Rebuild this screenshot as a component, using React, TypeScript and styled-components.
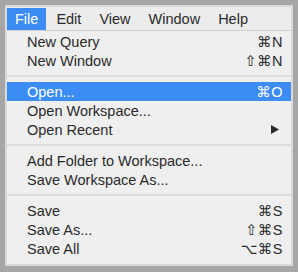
import React from "react";
import styled, { createGlobalStyle } from "styled-components";

const GlobalStyle = createGlobalStyle`
  html, body {
    margin: 0;
    padding: 0;
    background: #a6a6a6;
  }
  body {
    font-family: "Liberation Sans", "DejaVu Sans", Arial, sans-serif;
    -webkit-font-smoothing: antialiased;
  }
`;

type Entry =
  | { kind: "item"; label: string; keys?: string; submenu?: boolean; active?: boolean }
  | { kind: "sep" };

const topMenus = ["File", "Edit", "View", "Window", "Help"];

const entries: Entry[] = [
  { kind: "item", label: "New Query", keys: "⌘N" },
  { kind: "item", label: "New Window", keys: "⇧⌘N" },
  { kind: "sep" },
  { kind: "item", label: "Open...", keys: "⌘O", active: true },
  { kind: "item", label: "Open Workspace..." },
  { kind: "item", label: "Open Recent", submenu: true },
  { kind: "sep" },
  { kind: "item", label: "Add Folder to Workspace..." },
  { kind: "item", label: "Save Workspace As..." },
  { kind: "sep" },
  { kind: "item", label: "Save", keys: "⌘S" },
  { kind: "item", label: "Save As...", keys: "⇧⌘S" },
  { kind: "item", label: "Save All", keys: "⌥⌘S" },
];

const App: React.FC = () => {
  return (
    <>
      <GlobalStyle />
      <Frame>
        <Window>
          <MenuBar>
            {topMenus.map((m, i) => (
              <BarItem key={m} $open={i === 0}>
                {m}
              </BarItem>
            ))}
          </MenuBar>
          <Dropdown>
            {entries.map((e, i) =>
              e.kind === "sep" ? (
                <Separator key={i} />
              ) : (
                <Row key={i} $active={!!e.active}>
                  <Label>{e.label}</Label>
                  {e.keys && <Keys>{e.keys}</Keys>}
                  {e.submenu && (
                    <Arrow viewBox="0 0 8 9">
                      <path d="M0 0 L8 4.5 L0 9 Z" fill="currentColor" />
                    </Arrow>
                  )}
                </Row>
              )
            )}
          </Dropdown>
        </Window>
      </Frame>
    </>
  );
};

export default App;

const Frame = styled.div`
  width: 298px;
  height: 272px;
  box-sizing: border-box;
  padding: 5px 5px 6px 5px;
  background: #a6a6a6;
`;

const Window = styled.div`
  display: flex;
  flex-direction: column;
  border: 2px solid #d9d9d9;
  background: #efefef;
  color: #2a2a2a;
`;

const MenuBar = styled.div`
  display: flex;
  align-items: stretch;
  gap: 2px;
  height: 23px;
  background: #ececec;
  border-bottom: 1px solid #d2d2d2;
`;

const BarItem = styled.div<{ $open: boolean }>`
  display: flex;
  align-items: center;
  padding: 0 8px;
  margin-top: 1px;
  font-size: 14.5px;
  background: ${(p) => (p.$open ? "#3b8cf5" : "transparent")};
  color: ${(p) => (p.$open ? "#ffffff" : "#2a2a2a")};
`;

const Dropdown = styled.div`
  display: flex;
  flex-direction: column;
  padding: 1px 0 6px 0;
`;

const Row = styled.div<{ $active: boolean }>`
  display: flex;
  align-items: center;
  height: 19px;
  padding: 0 8px 0 20px;
  font-size: 14.5px;
  background: ${(p) => (p.$active ? "#3b8cf5" : "transparent")};
  color: ${(p) => (p.$active ? "#ffffff" : "#2a2a2a")};
`;

const Label = styled.span`
  flex: 1;
  white-space: nowrap;
`;

const Keys = styled.span`
  font-family: "Liberation Sans", "DejaVu Sans", sans-serif;
  font-size: 14.5px;
  letter-spacing: 0.5px;
  white-space: nowrap;
`;

const Arrow = styled.svg`
  width: 8px;
  height: 9px;
  margin-right: 4px;
`;

const Separator = styled.div`
  height: 12px;
  display: flex;
  align-items: center;

  &::after {
    content: "";
    flex: 1;
    height: 2px;
    background: #dcdcdc;
  }
`;
